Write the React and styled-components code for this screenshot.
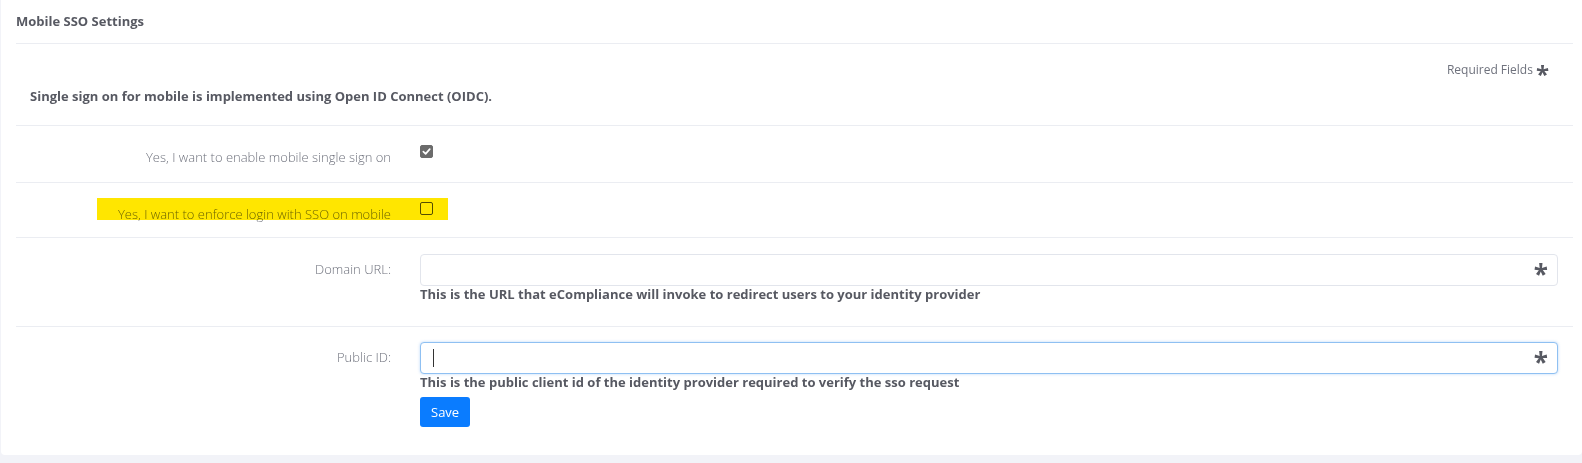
import React from "react";
import styled, { createGlobalStyle } from "styled-components";

const GlobalStyle = createGlobalStyle`
	html, body {
		margin: 0;
		padding: 0;
		background: #f2f3f8;
	}
	body {
		font-family: "Open Sans", "Liberation Sans", Arial, sans-serif;
		color: #575962;
	}
`;

const Page = styled.div`
	padding: 0 0 8px 1px;
	overflow: hidden;
`;

const Card = styled.div`
	background: #ffffff;
	border-radius: 0 0 4px 4px;
	padding: 0 9px 0 15px;
	height: 455px;
	box-sizing: border-box;
`;

const CardHeader = styled.div`
	height: 44px;
	display: flex;
	align-items: center;
	border-bottom: 1px solid #ebedf2;
	font-size: 13px;
	font-weight: 700;
	color: #575962;
	padding-bottom: 1px;
	box-sizing: border-box;
`;

const Intro = styled.div`
	height: 82px;
	box-sizing: border-box;
	border-bottom: 1px solid #ebedf2;
	display: flex;
	flex-direction: column;
	padding: 17px 24px 0 14px;
`;

const Required = styled.div`
	align-self: flex-end;
	display: flex;
	align-items: center;
	gap: 3px;
	font-size: 12px;
	color: #6f727d;
	line-height: 18px;
`;

const Star = styled.span`
	font-size: 24px;
	font-weight: 700;
	color: #575962;
	line-height: 14px;
	height: 14px;
	display: inline-block;
	transform: translateY(4px);
`;

const IntroText = styled.div`
	font-size: 13px;
	font-weight: 700;
	color: #575962;
	margin-top: 8px;
`;

const Row = styled.div`
	position: relative;
	display: grid;
	grid-template-columns: 389px 1fr;
	border-bottom: ${p => (p.last ? "none" : "1px solid #ebedf2")};
	height: ${p => p.h}px;
	box-sizing: border-box;
`;

const Label = styled.div`
	text-align: right;
	padding: ${p => p.pt}px 14px 0 0;
	font-size: 13px;
	font-weight: 300;
	color: #6f727d;
	line-height: 18px;
`;

const Control = styled.div`
	padding: ${p => p.pt}px 15px 0 15px;
	display: flex;
	flex-direction: column;
	align-items: flex-start;
`;

const Check = styled.span`
	width: 13px;
	height: 13px;
	box-sizing: border-box;
	border-radius: 2px;
	display: flex;
	align-items: center;
	justify-content: center;
	background: ${p => (p.checked ? "#6b6b6b" : "#ffffff")};
	border: 1px solid ${p => (p.checked ? "#6b6b6b" : "#555555")};
`;

const Highlight = styled.div`
	position: absolute;
	left: 81px;
	top: 15px;
	width: 351px;
	height: 22px;
	background: #ffe600;
	mix-blend-mode: multiply;
	pointer-events: none;
`;

const InputBox = styled.div`
	position: relative;
	width: 100%;
	height: 32px;
	box-sizing: border-box;
	border: 1px solid ${p => (p.focused ? "#8fc0f2" : "#e2e5ec")};
	border-radius: 4px;
	box-shadow: ${p => (p.focused ? "0 0 3px rgba(100, 165, 240, 0.45)" : "none")};
	background: #fff;
`;

const InputStar = styled.span`
	position: absolute;
	right: 9px;
	top: 11px;
	font-size: 26px;
	font-weight: 700;
	color: #575962;
	line-height: 16px;
`;

const Caret = styled.span`
	position: absolute;
	left: 12px;
	top: 6px;
	width: 1px;
	height: 18px;
	background: #333;
`;

const Help = styled.div`
	font-size: 13px;
	font-weight: 700;
	color: #575962;
	line-height: 16px;
	margin-top: 0;
`;

const SaveButton = styled.button`
	margin-top: 7px;
	height: 30px;
	padding: 0 11px;
	border: none;
	border-radius: 3px;
	background: #0a7cff;
	color: #fff;
	font-family: "Open Sans", "Liberation Sans", Arial, sans-serif;
	font-size: 13px;
	cursor: pointer;
`;

const CheckMark = () => (
	<svg width="9" height="9" viewBox="0 0 10 10">
		<path d="M1.5 5.2 L4 7.6 L8.6 2.4" fill="none" stroke="#fff" strokeWidth="1.9" strokeLinecap="round" strokeLinejoin="round" />
	</svg>
);

const App = () => {
	return (
		<Page>
			<GlobalStyle />
			<Card>
				<CardHeader>Mobile SSO Settings</CardHeader>
				<Intro>
					<Required>
						Required Fields <Star>*</Star>
					</Required>
					<IntroText>Single sign on for mobile is implemented using Open ID Connect (OIDC).</IntroText>
				</Intro>
				<Row h={57}>
					<Label pt={22}>Yes, I want to enable mobile single sign on</Label>
					<Control pt={19}>
						<Check checked>
							<CheckMark />
						</Check>
					</Control>
				</Row>
				<Row h={55}>
					<Label pt={22}>Yes, I want to enforce login with SSO on mobile</Label>
					<Control pt={19}>
						<Check />
					</Control>
					<Highlight />
				</Row>
				<Row h={89}>
					<Label pt={22}>Domain URL:</Label>
					<Control pt={16}>
						<InputBox>
							<InputStar>*</InputStar>
						</InputBox>
						<Help>This is the URL that eCompliance will invoke to redirect users to your identity provider</Help>
					</Control>
				</Row>
				<Row h={128} last>
					<Label pt={21}>Public ID:</Label>
					<Control pt={15}>
						<InputBox focused>
							<Caret />
							<InputStar>*</InputStar>
						</InputBox>
						<Help>This is the public client id of the identity provider required to verify the sso request</Help>
						<SaveButton>Save</SaveButton>
					</Control>
				</Row>
			</Card>
		</Page>
	);
};

export default App;
